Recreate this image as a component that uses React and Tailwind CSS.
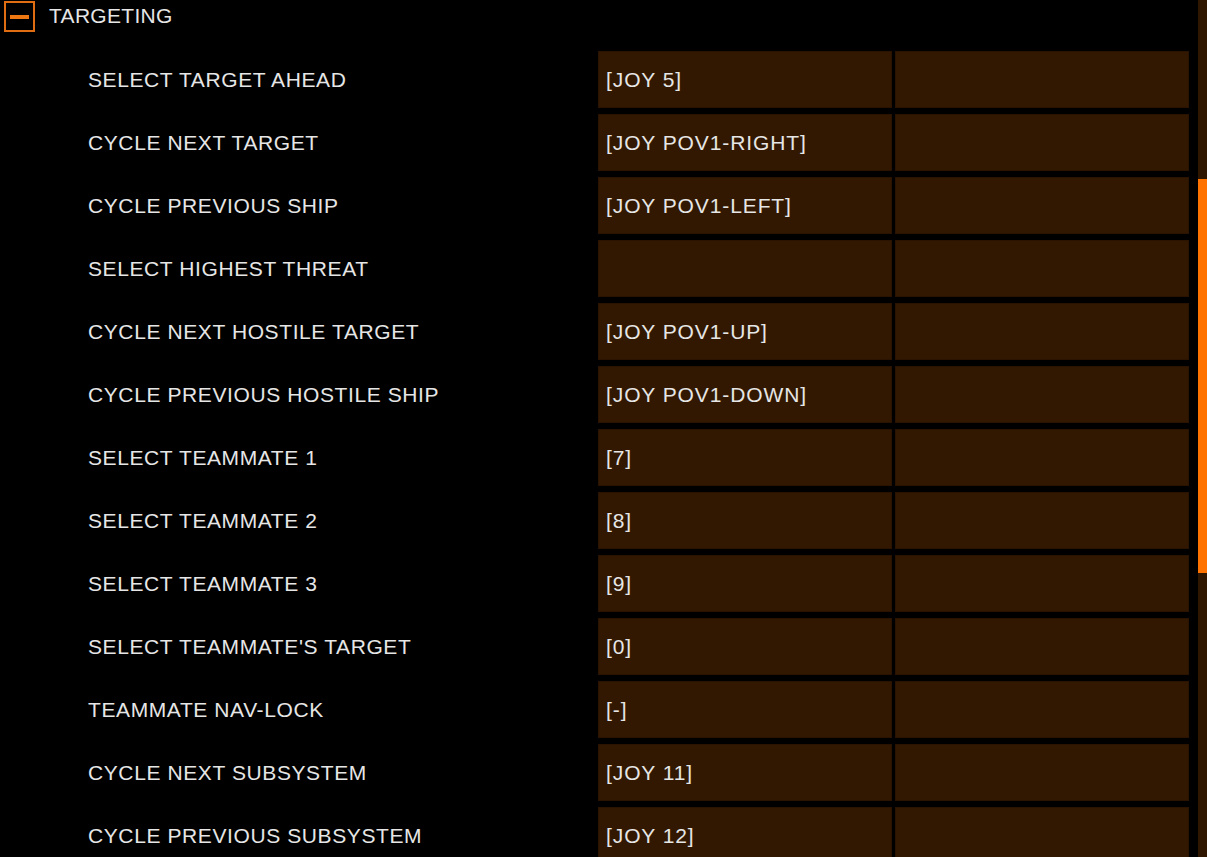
import React from 'react';

const rows = [
    ['SELECT TARGET AHEAD', '[JOY 5]'],
    ['CYCLE NEXT TARGET', '[JOY POV1-RIGHT]'],
    ['CYCLE PREVIOUS SHIP', '[JOY POV1-LEFT]'],
    ['SELECT HIGHEST THREAT', ''],
    ['CYCLE NEXT HOSTILE TARGET', '[JOY POV1-UP]'],
    ['CYCLE PREVIOUS HOSTILE SHIP', '[JOY POV1-DOWN]'],
    ['SELECT TEAMMATE 1', '[7]'],
    ['SELECT TEAMMATE 2', '[8]'],
    ['SELECT TEAMMATE 3', '[9]'],
    ["SELECT TEAMMATE'S TARGET", '[0]'],
    ['TEAMMATE NAV-LOCK', '[-]'],
    ['CYCLE NEXT SUBSYSTEM', '[JOY 11]'],
    ['CYCLE PREVIOUS SUBSYSTEM', '[JOY 12]'],
];

export default function App() {
    return (
        <div
            className="h-[857px] w-[1207px] bg-black overflow-hidden flex text-[#e6e6e6]"
            style={{ fontFamily: '"Liberation Sans", Arial, sans-serif' }}
        >
            {/* Bindings list */}
            <div className="w-[1189px] shrink-0">
                {/* Section header */}
                <div className="h-[51px] flex items-start">
                    <div className="ml-[4px] mt-[1px] w-[31px] h-[31px] border-2 border-[#e06d12] flex items-center justify-center">
                        <div className="w-[19px] h-[4px] bg-[#f07812]"></div>
                    </div>
                    <span className="ml-[14px] mt-[4px] text-[21px] leading-[24px] tracking-[0.3px]">TARGETING</span>
                </div>

                <div className="flex flex-col gap-[6px]">
                    {rows.map(([label, key]) => (
                        <div key={label} className="grid grid-cols-[595px_294px_294px] gap-x-[3px] h-[57px] shrink-0">
                            <div className="pl-[88px] flex items-center text-[21px] tracking-[0.6px] whitespace-nowrap">{label}</div>
                            <div className="bg-[#321800] border border-[#2a1300] flex items-center pl-[7px] text-[21px] tracking-[0.9px] whitespace-nowrap">{key}</div>
                            <div className="bg-[#321800] border border-[#2a1300]"></div>
                        </div>
                    ))}
                </div>
            </div>

            {/* Scrollbar */}
            <div className="ml-[9px] w-[9px] h-full bg-[#2f1600] flex flex-col">
                <div className="h-[179px] shrink-0"></div>
                <div className="h-[394px] shrink-0 bg-[#ff7300]"></div>
            </div>
        </div>
    );
}
